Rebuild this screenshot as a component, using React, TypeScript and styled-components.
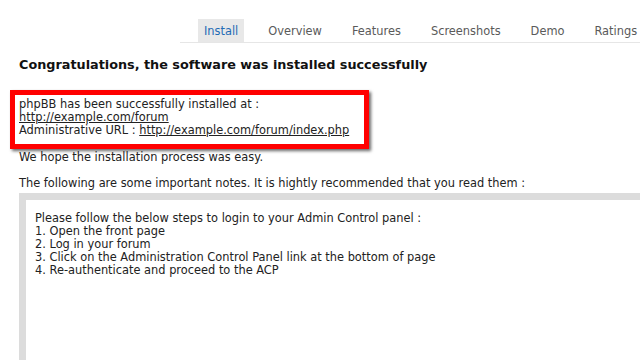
import React from "react";
import styled, { createGlobalStyle, css } from "styled-components";

const GlobalStyle = createGlobalStyle`
  html, body {
    margin: 0;
    padding: 0;
    background: #ffffff;
    overflow: hidden;
  }
  body {
    font-family: "DejaVu Sans", Verdana, sans-serif;
    font-size: 11.4px;
    color: #222222;
  }
`;

const tabs = ["Install", "Overview", "Features", "Screenshots", "Demo", "Ratings"];

const steps = [
  "Please follow the below steps to login to your Admin Control panel :",
  "1. Open the front page",
  "2. Log in your forum",
  "3. Click on the Administration Control Panel link at the bottom of page",
  "4. Re-authenticate and proceed to the ACP",
];

const App = () => {
  return (
    <Page>
      <GlobalStyle />
      <TabBar>
        {tabs.map((tab, i) => (
          <Tab key={tab} active={i === 0}>
            {tab}
          </Tab>
        ))}
      </TabBar>
      <Content>
        <Title>Congratulations, the software was installed successfully</Title>
        <Highlight>
          <Line>phpBB has been successfully installed at :</Line>
          <Line>
            <Link href="#">http://example.com/forum</Link>
          </Line>
          <Line>
            Administrative URL : <Link href="#">http://example.com/forum/index.php</Link>
          </Line>
        </Highlight>
        <Paragraph>We hope the installation process was easy.</Paragraph>
        <Paragraph tight>
          The following are some important notes. It is hightly recommended that you read them :
        </Paragraph>
        <NotesBox>
          {steps.map((s) => (
            <Line key={s}>{s}</Line>
          ))}
        </NotesBox>
      </Content>
    </Page>
  );
};

export default App;

const Page = styled.div`
  width: 640px;
  height: 360px;
  overflow: hidden;
`;

const TabBar = styled.div`
  display: flex;
  margin-left: 180px;
  padding: 19px 0 0 18px;
  border-bottom: 1px solid #e6e6e6;
  overflow: hidden;
`;

const Tab = styled.div<{ active: boolean }>`
  flex: none;
  height: 23px;
  line-height: 24px;
  padding: 0 6px;
  margin-right: 18px;
  color: #5a5a5a;
  font-size: 11.4px;
  white-space: nowrap;

  ${(p) =>
    p.active &&
    css`
      background: #e8e8e8;
      color: #1f6bb5;
    `}
`;

const Content = styled.div`
  padding: 0 0 0 19px;
`;

const Title = styled.h1`
  margin: 14px 0 0;
  font-size: 12.8px;
  font-weight: bold;
  color: #111111;
  line-height: 16px;
`;

const Highlight = styled.div`
  margin: 17px 0 0 -9px;
  width: 341px;
  border: 5px solid #ff0000;
  padding: 3px 4px 7px 4px;
  box-shadow: 2px 2px 3px rgba(0, 0, 0, 0.6);
`;

const Line = styled.div`
  line-height: 13px;
  white-space: nowrap;
`;

const Link = styled.a`
  color: #222222;
  text-decoration: underline;
`;

const Paragraph = styled.p<{ tight?: boolean }>`
  margin: 2px 0 ${(p) => (p.tight ? "3px" : "13px")};
  line-height: 13px;
  white-space: nowrap;
`;

const NotesBox = styled.div`
  height: 200px;
  border-top: 7px solid #dcdcdc;
  border-left: 7px solid #dcdcdc;
  padding: 12px 9px;
`;
